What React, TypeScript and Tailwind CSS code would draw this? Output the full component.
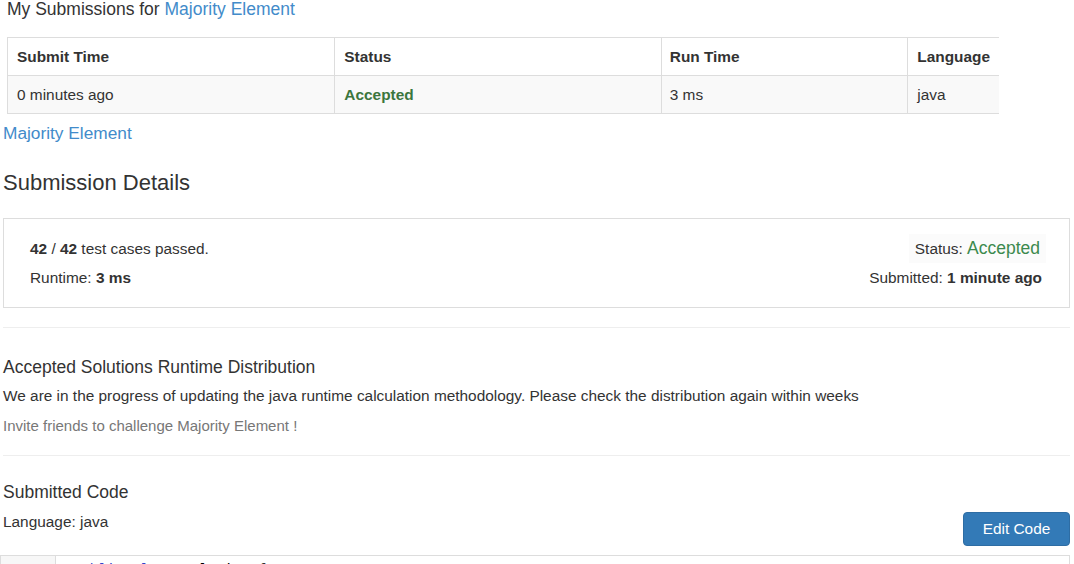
export default function App() {
  return (
    <div className="w-[1074px] h-[564px] overflow-hidden bg-white text-[#333] font-['Liberation_Sans',Arial,sans-serif]">
      <div className="px-[7px]">
        <h3 className="text-[17.5px] leading-[20px] -mt-[1px]">
          My Submissions for <a className="text-[#428bca]">Majority Element</a>
        </h3>
        <table className="mt-[18px] w-[992px] border-collapse text-[15.4px] leading-[20px]">
          <thead>
            <tr className="h-[38px]">
              <th className="w-[328px] border border-[#ddd] px-[9px] text-left font-bold">Submit Time</th>
              <th className="w-[327px] border border-[#ddd] px-[9px] text-left font-bold">Status</th>
              <th className="w-[247px] border border-[#ddd] px-[8px] text-left font-bold">Run Time</th>
              <th className="border border-[#ddd] border-r-0 px-[9px] text-left font-bold">Language</th>
            </tr>
          </thead>
          <tbody>
            <tr className="h-[38px] bg-[#f9f9f9]">
              <td className="border border-[#ddd] px-[9px]">0 minutes ago</td>
              <td className="border border-[#ddd] px-[9px] font-bold text-[#3c763d]">Accepted</td>
              <td className="border border-[#ddd] px-[8px]">3 ms</td>
              <td className="border border-[#ddd] border-r-0 px-[9px]">java</td>
            </tr>
          </tbody>
        </table>
      </div>

      <div className="pl-[3px] pr-[4px]">
        <a className="block mt-[9px] text-[17.3px] leading-[20px] text-[#428bca]">Majority Element</a>

        <h2 className="mt-[28px] text-[22px] leading-[24px]">Submission Details</h2>

        <div className="mt-[23px] h-[90px] border border-[#ddd] pl-[26px] pr-[27px] py-[15px] flex justify-between text-[15.4px] leading-[20px]">
          <div className="flex flex-col">
            <div className="h-[29px] flex items-center">
              <span><b>42</b> / <b>42</b> test cases passed.</span>
            </div>
            <div className="h-[29px] flex items-center">
              <span>Runtime: <b>3 ms</b></span>
            </div>
          </div>
          <div className="flex flex-col items-end">
            <div className="h-[29px] flex items-center bg-[#fbfbfb] px-[6px] -mr-[4px]">
              <span>
                Status: <span className="text-[17.5px] text-[#3c8a4e]">Accepted</span>
              </span>
            </div>
            <div className="h-[29px] flex items-center">
              <span>Submitted: <b>1 minute ago</b></span>
            </div>
          </div>
        </div>

        <hr className="mt-[19px] border-0 border-t border-[#eee]" />

        <h4 className="mt-[29px] text-[17.5px] leading-[20px]">Accepted Solutions Runtime Distribution</h4>
        <p className="mt-[9px] text-[15.4px] leading-[20px]">
          We are in the progress of updating the java runtime calculation methodology. Please check the distribution again within weeks
        </p>
        <p className="mt-[10px] text-[15px] leading-[20px] text-[#777]">Invite friends to challenge Majority Element !</p>

        <hr className="mt-[19px] border-0 border-t border-[#eee]" />

        <h4 className="mt-[26px] text-[17.5px] leading-[20px]">Submitted Code</h4>
        <div className="flex justify-between items-start">
          <p className="mt-[10px] text-[15.4px] leading-[20px]">Language: java</p>
          <button className="mt-[10px] h-[34px] w-[107px] rounded-[4px] border border-[#2e6da4] bg-[#337ab7] text-[15.4px] text-white">
            Edit Code
          </button>
        </div>

        <div className="mt-[9px] -ml-[3px] border border-[#ddd] flex font-['Liberation_Mono',monospace] text-[14px] leading-[18px]">
          <div className="w-[55px] bg-[#f7f7f7] border-r border-[#ddd] text-right pr-[14px] text-[#999] pt-[5px]">1</div>
          <div className="pl-[17px] pt-[5px]">
            <span className="text-[#3344cc]">public</span> <span className="text-[#3344cc]">class</span> <span className="text-[#000]">Solution</span> {"{"}
          </div>
        </div>
      </div>
    </div>
  );
}
